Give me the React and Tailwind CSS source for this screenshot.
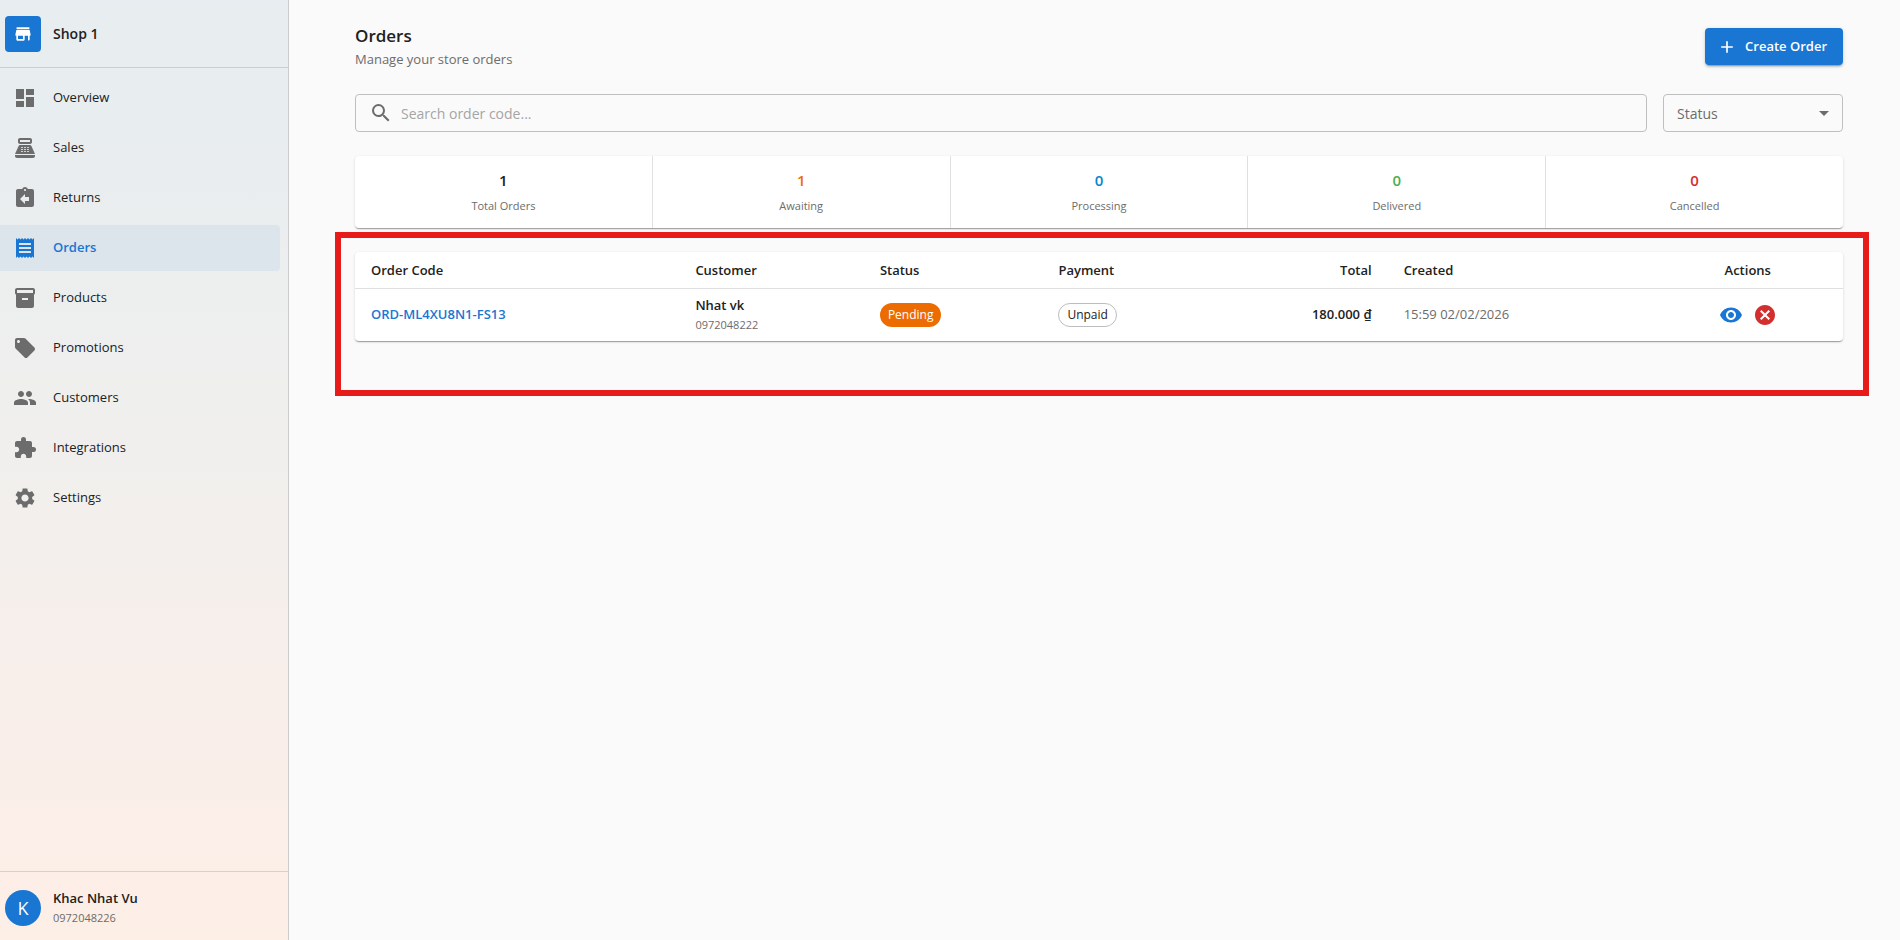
import React, { useState } from "react";
import {
  MdAdd,
  MdArrowDropDown,
  MdAssignmentReturn,
  MdCancel,
  MdDashboard,
  MdExtension,
  MdInventory2,
  MdLocalOffer,
  MdPeople,
  MdPointOfSale,
  MdReceipt,
  MdSearch,
  MdSettings,
  MdVisibility,
} from "react-icons/md";

const navItems = [
  { label: "Overview", icon: MdDashboard },
  { label: "Sales", icon: MdPointOfSale },
  { label: "Returns", icon: MdAssignmentReturn },
  { label: "Orders", icon: MdReceipt },
  { label: "Products", icon: MdInventory2 },
  { label: "Promotions", icon: MdLocalOffer },
  { label: "Customers", icon: MdPeople },
  { label: "Integrations", icon: MdExtension },
  { label: "Settings", icon: MdSettings },
];

const stats = [
  { label: "Total Orders", value: 1, color: "text-[#212121]" },
  { label: "Awaiting", value: 1, color: "text-[#ed6c02]" },
  { label: "Processing", value: 0, color: "text-[#0288d1]" },
  { label: "Delivered", value: 0, color: "text-[#4caf50]" },
  { label: "Cancelled", value: 0, color: "text-[#d32f2f]" },
];

const orders = [
  {
    code: "ORD-ML4XU8N1-FS13",
    customer: "Nhat vk",
    phone: "0972048222",
    status: "Pending",
    payment: "Unpaid",
    total: "180.000 ₫",
    created: "15:59 02/02/2026",
  },
];

const paper =
  "rounded bg-white shadow-[0_2px_1px_-1px_rgba(0,0,0,0.2),0_1px_1px_0_rgba(0,0,0,0.14),0_1px_3px_0_rgba(0,0,0,0.12)]";

// Rounded variant of the material "store" icon
const StoreIcon = ({ className }) => (
  <svg className={className} viewBox="0 0 24 24" fill="currentColor">
    <path d="M5 6h14c.55 0 1-.45 1-1s-.45-1-1-1H5c-.55 0-1 .45-1 1s.45 1 1 1zm15.16 1.8c-.09-.46-.5-.8-.98-.8H4.82c-.48 0-.89.34-.98.8l-1 5c-.12.62.35 1.2.98 1.2H4v5c0 .55.45 1 1 1h8c.55 0 1-.45 1-1v-5h4v5c0 .55.45 1 1 1s1-.45 1-1v-5h.18c.63 0 1.1-.58.98-1.2l-1-5zM12 18H6v-4h6v4z" />
  </svg>
);

const NavItem = ({ label, icon: Icon, active, onSelect }) => (
  <a
    href={`#${label.toLowerCase()}`}
    onClick={onSelect}
    className={`flex h-[46px] items-center gap-4 rounded-r pl-[13px] text-[13px] ${active ? "bg-[#dce4ec] font-semibold text-[#1976d2]" : "text-[#212121]"}`}
  >
    <Icon className={`size-6 ${active ? "text-[#1976d2]" : "text-[#6c6c6c]"}`} />
    {label}
  </a>
);

const Sidebar = () => {
  const [current, setCurrent] = useState("Orders");

  return (
    <aside className="flex w-[289px] shrink-0 flex-col border-r border-[#cccccc] bg-[linear-gradient(180deg,#e8edf1_0%,#e9edef_18%,#efefee_40%,#f3efec_58%,#faeeea_80%,#fdefe6_100%)]">
      <div className="flex h-[68px] items-center gap-3 border-b border-[#c9cfd3] pl-[5px]">
        <div className="flex size-9 items-center justify-center rounded bg-[#1976d2]">
          <StoreIcon className="size-5 text-white" />
        </div>
        <span className="text-[14px] font-semibold">Shop 1</span>
      </div>

      <nav className="flex flex-1 flex-col gap-1 pt-[7px] pr-2">
        {navItems.map((item) => (
          <NavItem
            key={item.label}
            {...item}
            active={item.label === current}
            onSelect={() => setCurrent(item.label)}
          />
        ))}
      </nav>

      <div className="flex items-center gap-3 border-t border-[#d9cfcb] pt-4 pb-3 pl-[5px]">
        <div className="flex size-9 items-center justify-center rounded-full bg-[#1976d2] text-[18px] text-white">K</div>
        <div>
          <p className="text-[13px] leading-5 font-semibold">Khac Nhat Vu</p>
          <p className="text-[11px] leading-5 text-[#6c6c6c]">0972048226</p>
        </div>
      </div>
    </aside>
  );
};

const StatCell = ({ label, value, color }) => (
  <div className="flex-1 border-r border-[#e0e0e0] py-3 text-center last:border-0">
    <p className={`text-[15px] leading-6 font-semibold ${color}`}>{value}</p>
    <p className="mt-1 text-[11px] leading-5 text-[#6c6c6c]">{label}</p>
  </div>
);

const OrderRow = ({ order }) => (
  <tr>
    <td className="px-4 py-[6px]">
      <a href={`#${order.code}`} className="font-semibold text-[#1976d2]">
        {order.code}
      </a>
    </td>
    <td className="px-4 py-[6px]">
      <p className="leading-5 font-semibold">{order.customer}</p>
      <p className="text-[11px] leading-5 text-[#6c6c6c]">{order.phone}</p>
    </td>
    <td className="px-4 py-[6px]">
      <span className="inline-flex h-6 items-center rounded-full bg-[#ed6c02] px-2 text-[12px] text-white">
        {order.status}
      </span>
    </td>
    <td className="px-4 py-[6px]">
      <span className="inline-flex h-6 items-center rounded-full border border-[#bdbdbd] px-2 text-[12px]">
        {order.payment}
      </span>
    </td>
    <td className="px-4 py-[6px] text-right font-semibold">{order.total}</td>
    <td className="px-4 py-[6px] text-[#6c6c6c]">{order.created}</td>
    <td className="px-4 py-[6px]">
      <div className="flex justify-center gap-[10px]">
        <button aria-label="View order" className="text-[#1976d2]">
          <MdVisibility className="size-6" />
        </button>
        <button aria-label="Cancel order" className="text-[#d32f2f]">
          <MdCancel className="size-6" />
        </button>
      </div>
    </td>
  </tr>
);

const OrdersTable = () => (
  <div className={`relative ${paper}`}>
    <table className="w-full table-fixed text-left text-[13px]">
      <colgroup>
        <col className="w-[21.8%]" />
        <col className="w-[12.4%]" />
        <col className="w-[12%]" />
        <col className="w-[10%]" />
        <col className="w-[13.2%]" />
        <col className="w-[17.8%]" />
        <col className="w-[12.8%]" />
      </colgroup>
      <thead>
        <tr className="border-b border-[#e0e0e0] leading-6 [&>th]:px-4 [&>th]:py-[6px] [&>th]:font-semibold">
          <th>Order Code</th>
          <th>Customer</th>
          <th>Status</th>
          <th>Payment</th>
          <th className="text-right">Total</th>
          <th>Created</th>
          <th className="text-center">Actions</th>
        </tr>
      </thead>
      <tbody>
        {orders.map((order) => (
          <OrderRow key={order.code} order={order} />
        ))}
      </tbody>
    </table>
    {/* highlight frame around the table */}
    <div className="pointer-events-none absolute -top-5 -right-[26px] -bottom-[55px] -left-5 border-6 border-[#e81b1b]" />
  </div>
);

export default function App() {
  const [search, setSearch] = useState("");
  const [status, setStatus] = useState("");

  return (
    <div className="flex min-h-screen bg-[#fafafa] font-['Open_Sans',sans-serif] text-[#212121]">
      <Sidebar />

      <main className="min-w-0 flex-1 pl-[9px]">
        <div className="mx-auto max-w-[1536px] p-6">
          <div className="mb-6 flex items-start justify-between">
            <div>
              <h1 className="text-[17px] leading-6 font-semibold">Orders</h1>
              <p className="text-[13px] leading-[22px] text-[#6c6c6c]">Manage your store orders</p>
            </div>
            <button className="mt-1 flex h-[37px] items-center gap-2 rounded bg-[#1976d2] pr-4 pl-3 text-[13px] font-semibold text-white shadow-[0_3px_1px_-2px_rgba(0,0,0,0.2),0_2px_2px_0_rgba(0,0,0,0.14),0_1px_5px_0_rgba(0,0,0,0.12)]">
              <MdAdd className="size-5" />
              Create Order
            </button>
          </div>

          <div className="mb-6 flex gap-4">
            <label className="flex h-[38px] flex-1 items-center gap-2 rounded border border-[#bfbfbf] px-[13px]">
              <MdSearch className="size-6 text-[#6c6c6c]" />
              <input
                type="text"
                aria-label="Search orders"
                placeholder="Search order code..."
                value={search}
                onChange={(e) => setSearch(e.target.value)}
                className="flex-1 bg-transparent text-[14px] outline-none placeholder:text-[#a5a5a5]"
              />
            </label>
            <div className="relative w-[180px]">
              <select
                aria-label="Status"
                value={status}
                onChange={(e) => setStatus(e.target.value)}
                className="h-[38px] w-full appearance-none rounded border border-[#bfbfbf] bg-transparent px-[13px] text-[14px] text-[#6c6c6c]"
              >
                <option value="">Status</option>
                <option value="pending">Pending</option>
                <option value="delivered">Delivered</option>
                <option value="cancelled">Cancelled</option>
              </select>
              <MdArrowDropDown className="pointer-events-none absolute top-[7px] right-[7px] size-6 text-[#6c6c6c]" />
            </div>
          </div>

          <div className={`mb-6 flex ${paper}`}>
            {stats.map((stat) => (
              <StatCell key={stat.label} {...stat} />
            ))}
          </div>

          <OrdersTable />
        </div>
      </main>
    </div>
  );
}
